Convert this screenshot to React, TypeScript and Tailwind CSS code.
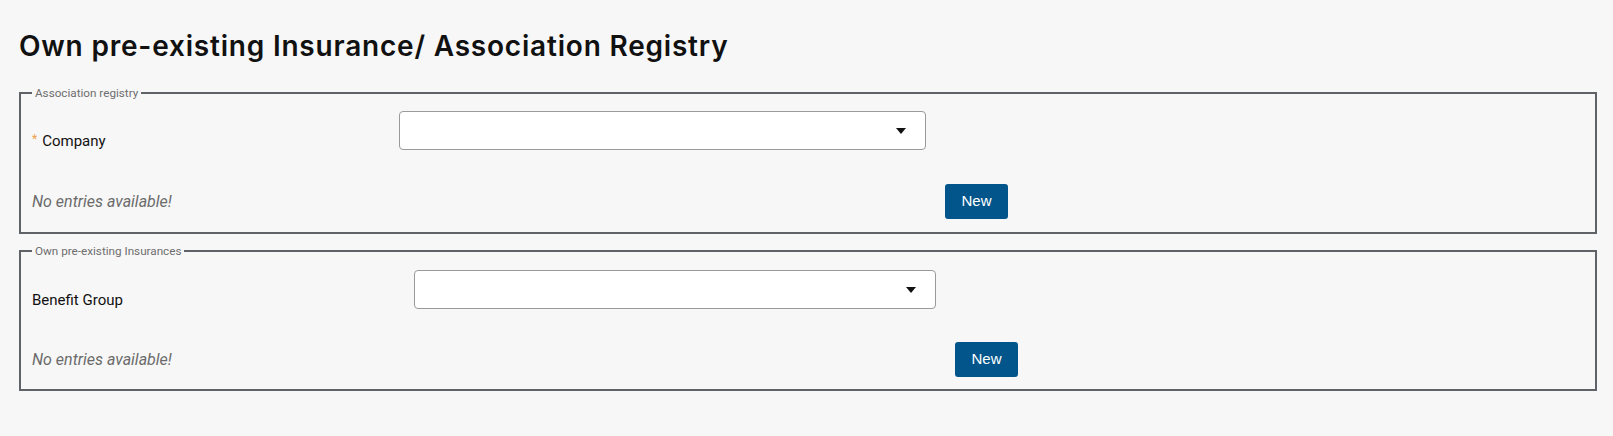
export default function App() {
  return (
    <div className="min-h-screen bg-[#f7f7f7] pt-[28px] pl-[19px] pr-[16px] pb-10">
      <h1 className="text-[28px] leading-[36px] font-semibold tracking-[0.8px] text-[#111] font-['Inter',sans-serif]">
        Own pre-existing Insurance/ Association Registry
      </h1>

      {/* ASSOCIATION REGISTRY */}
      <fieldset className="mt-[22px] border-2 border-[#5f6266] px-[11px] pt-[11px] pb-[13px]">
        <legend className="px-[3px] text-[11.7px] leading-[14px] text-[#6e6e6e] font-['Roboto',sans-serif]">
          Association registry
        </legend>
        <div className="flex items-end">
          <div className="w-[367px] pb-[1px] flex items-start text-[15px] leading-[16px] text-[#111] font-['Roboto',sans-serif]">
            <span className="text-[12px] leading-[12px] text-[#f0a04b] mr-[5px]">*</span>
            Company
          </div>
          <SelectBox width="w-[527px]" />
        </div>
        <div className="flex items-center mt-[34px]">
          <div className="w-[913px] text-[16px] italic text-[#6b6b6b] font-['Roboto',sans-serif]">
            No entries available!
          </div>
          <NewButton />
        </div>
      </fieldset>

      {/* OWN INSURANCES */}
      <fieldset className="mt-[10px] border-2 border-[#5f6266] px-[11px] pt-[12px] pb-[12px]">
        <legend className="px-[3px] text-[11.7px] leading-[14px] text-[#6e6e6e] font-['Roboto',sans-serif]">
          Own pre-existing Insurances
        </legend>
        <div className="flex items-end">
          <div className="w-[382px] pb-[1px] text-[15px] leading-[16px] text-[#111] font-['Roboto',sans-serif]">
            Benefit Group
          </div>
          <SelectBox width="w-[522px]" />
        </div>
        <div className="flex items-center mt-[33px]">
          <div className="w-[923px] text-[16px] italic text-[#6b6b6b] font-['Roboto',sans-serif]">
            No entries available!
          </div>
          <NewButton />
        </div>
      </fieldset>
    </div>
  );
}

function SelectBox({ width }: { width: string }) {
  return (
    <div
      className={`${width} h-[39px] bg-white border border-[#9a9a9a] rounded-[4px] flex items-center justify-end pr-[19px]`}
    >
      <svg width="10" height="6" viewBox="0 0 10 6">
        <path d="M0 0 L10 0 L5 6 Z" fill="#111" />
      </svg>
    </div>
  );
}

function NewButton() {
  return (
    <button className="w-[63px] h-[35px] bg-[#02558a] rounded-[3px] text-white text-[15px] font-['Liberation_Sans',Arial,sans-serif]">
      New
    </button>
  );
}
